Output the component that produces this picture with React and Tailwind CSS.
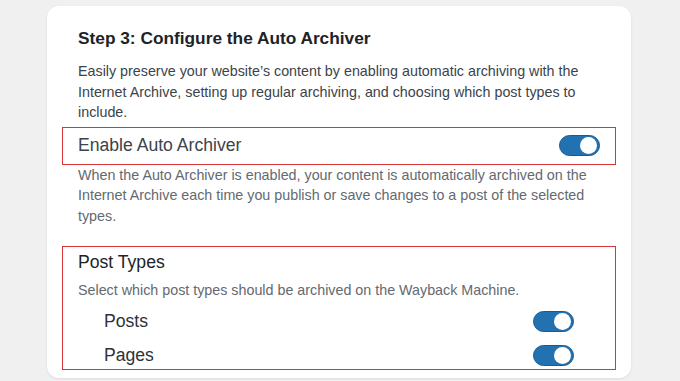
import { useState } from 'react';

function Toggle({ on, onClick }) {
    return (
        <button
            type="button"
            onClick={onClick}
            className={`flex items-center w-[41px] h-[21px] rounded-full p-[2px] border border-[#1a5a8f] ${on ? 'bg-[#2271b1] justify-end' : 'bg-[#c3c4c7] justify-start'}`}
        >
            <span className="block w-[17px] h-[17px] rounded-full bg-white" />
        </button>
    );
}

export default function App() {
    const [auto, setAuto] = useState(true);
    const [types, setTypes] = useState({ Posts: true, Pages: true });

    return (
        <div className="min-h-[381px] bg-[#f0f0f1] pt-[6px] pl-[47px] pr-[49px] font-['Liberation_Sans',Arial,sans-serif]">
            <div className="bg-white rounded-[12px] shadow-[0_1px_3px_rgba(0,0,0,0.08)] px-[31px] pt-[21px] pb-[8px]">
                <h2 className="text-[17.3px] leading-[22px] font-bold text-[#1d2327]">Step 3: Configure the Auto Archiver</h2>
                <p className="mt-[12px] text-[14.3px] leading-[20.5px] text-[#3c434a]">
                    Easily preserve your website’s content by enabling automatic archiving with the Internet Archive, setting up regular archiving, and choosing which post types to include.
                </p>

                <div className="mt-[4px] -mx-[16px] border border-[#d63638] px-[15px] h-[38px] flex items-center justify-between">
                    <span className="text-[17.6px] text-[#3c434a]">Enable Auto Archiver</span>
                    <Toggle on={auto} onClick={() => setAuto(!auto)} />
                </div>
                <p className="text-[14.3px] leading-[20.5px] text-[#646970]">
                    When the Auto Archiver is enabled, your content is automatically archived on the Internet Archive each time you publish or save changes to a post of the selected types.
                </p>

                <div className="mt-[20px] -mx-[16px] border border-[#d63638] px-[15px] pt-[4px] pb-[3px]">
                    <h3 className="text-[17.6px] leading-[22px] text-[#1d2327]">Post Types</h3>
                    <p className="mt-[7px] text-[14.3px] leading-[20px] text-[#646970]">
                        Select which post types should be archived on the Wayback Machine.
                    </p>
                    <div className="mt-[11px] px-[26px] flex flex-col gap-[13px]">
                        {Object.keys(types).map((t) => (
                            <div key={t} className="flex items-center justify-between h-[21px]">
                                <span className="text-[17.6px] text-[#2c3338]">{t}</span>
                                <Toggle on={types[t]} onClick={() => setTypes({ ...types, [t]: !types[t] })} />
                            </div>
                        ))}
                    </div>
                </div>
            </div>
        </div>
    );
}
